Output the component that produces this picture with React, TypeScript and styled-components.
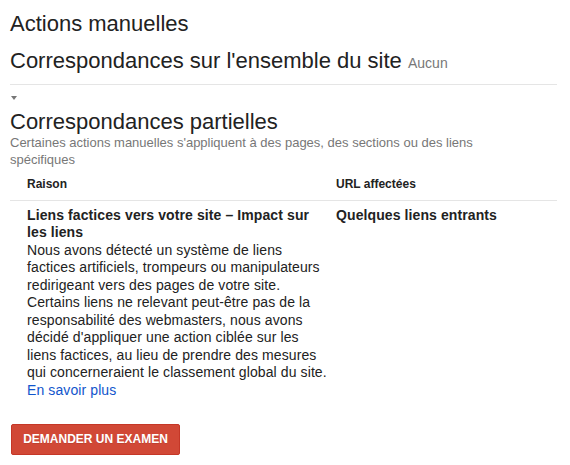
import React from 'react';
import styled, { createGlobalStyle } from 'styled-components';

const GlobalStyle = createGlobalStyle`
  body {
    margin: 0;
    background: #fff;
    font-family: "Liberation Sans", Arial, sans-serif;
    color: #222;
  }
`;

const Page = styled.div`
  width: 547px;
  padding: 11px 0 0 10px;
`;

const Title = styled.h1`
  margin: 0 0 11px;
  font-size: 22px;
  font-weight: normal;
  line-height: 26px;
  color: #222;
`;

const SectionTitle = styled.h2`
  margin: 0;
  font-size: 22px;
  font-weight: normal;
  line-height: 26px;
  color: #222;
`;

const Count = styled.span`
  font-size: 14px;
  color: #777;
`;

const Divider = styled.hr`
  border: 0;
  border-top: 1px solid #e5e5e5;
  margin: 8px 0 0;
`;

const Toggle = styled.div`
  width: 0;
  height: 0;
  margin: 11px 0 9px 1px;
  border-left: 3.5px solid transparent;
  border-right: 3.5px solid transparent;
  border-top: 4px solid #777;
`;

const Description = styled.p`
  width: 520px;
  margin: -1px 0 0;
  font-size: 13px;
  line-height: 17px;
  color: #777;
`;

const Table = styled.div`
  margin-top: 3px;
`;

const Row = styled.div<{ $header?: boolean }>`
  display: grid;
  grid-template-columns: 309px 1fr;
  padding: ${(p) => (p.$header ? '6px 0 9px 17px' : '6px 0 0 17px')};
  border-bottom: ${(p) => (p.$header ? '1px solid #e5e5e5' : '0')};
`;

const HeadCell = styled.div`
  font-size: 12px;
  font-weight: bold;
  line-height: 14px;
  color: #222;
`;

const Cell = styled.div`
  font-size: 14px;
  line-height: 17.45px;
  letter-spacing: 0.1px;
  color: #222;
  padding-right: 7px;
`;

const Strong = styled.div`
  font-weight: bold;
`;

const Link = styled.a`
  color: #1155cc;
  text-decoration: none;
`;

const Button = styled.button`
  display: block;
  margin: 25px 0 0 1px;
  width: 169px;
  height: 31px;
  padding: 0;
  border: 1px solid #c53727;
  border-radius: 2px;
  background: #d14836;
  color: #fff;
  font-family: "Liberation Sans", Arial, sans-serif;
  font-size: 12px;
  font-weight: bold;
  text-transform: uppercase;
  text-shadow: 0 1px rgba(0, 0, 0, 0.1);
  cursor: pointer;
`;

export default function App() {
  return (
    <>
      <GlobalStyle />
      <Page>
        <Title>Actions manuelles</Title>
        <SectionTitle>
          Correspondances sur l'ensemble du site <Count>Aucun</Count>
        </SectionTitle>
        <Divider />
        <Toggle />
        <SectionTitle>Correspondances partielles</SectionTitle>
        <Description>
          Certaines actions manuelles s'appliquent à des pages, des sections ou des liens
          spécifiques
        </Description>
        <Table>
          <Row $header>
            <HeadCell>Raison</HeadCell>
            <HeadCell>URL affectées</HeadCell>
          </Row>
          <Row>
            <Cell>
              <Strong>Liens factices vers votre site – Impact sur les liens</Strong>
              Nous avons détecté un système de liens factices artificiels, trompeurs ou
              manipulateurs redirigeant vers des pages de votre site. Certains liens ne
              relevant peut-être pas de la responsabilité des webmasters, nous avons décidé
              d'appliquer une action ciblée sur les liens factices, au lieu de prendre des
              mesures qui concerneraient le classement global du site.
              <br />
              <Link href="#">En savoir plus</Link>
            </Cell>
            <Cell>
              <Strong>Quelques liens entrants</Strong>
            </Cell>
          </Row>
        </Table>
        <Button>Demander un examen</Button>
      </Page>
    </>
  );
}
